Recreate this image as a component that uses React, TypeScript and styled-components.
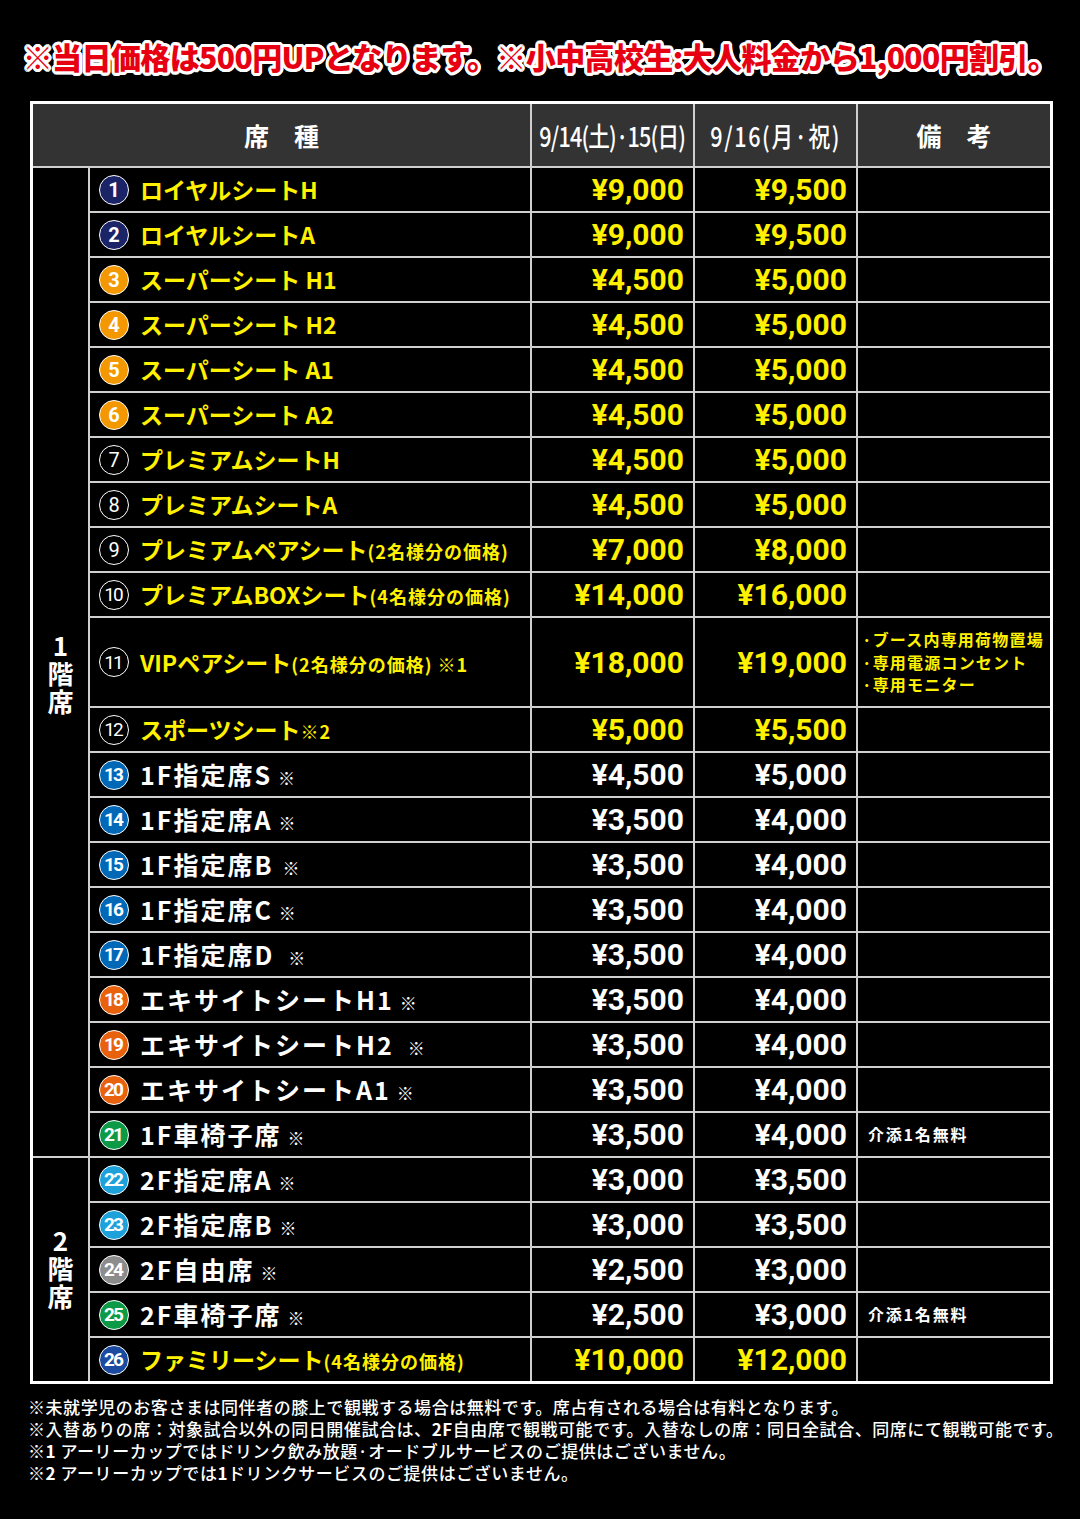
import React from 'react';
import styled, { createGlobalStyle } from 'styled-components';

const GlobalStyle = createGlobalStyle`
  html, body {
    margin: 0;
    padding: 0;
    background: #000;
  }
  body {
    font-family: 'Noto Sans CJK JP', 'Noto Sans', sans-serif;
  }
`;

const YELLOW = '#fff100';
const JP = `'Noto Sans CJK JP', 'Noto Sans', sans-serif`;
const NUM = `Roboto, 'Liberation Sans', 'Noto Sans CJK JP', sans-serif`;

const outline = (() => {
  const out: string[] = [];
  for (let i = 0; i < 16; i++) {
    const a = (i / 16) * Math.PI * 2;
    out.push(`${(Math.cos(a) * 3).toFixed(2)}px ${(Math.sin(a) * 3).toFixed(2)}px 0 #fff`);
  }
  return out.join(', ');
})();

const Page = styled.div`
  width: 1080px;
  min-height: 1519px;
  background: #000;
  padding-top: 36px;
  box-sizing: border-box;
`;

const Notice = styled.h1`
  margin: 0;
  height: 40px;
  line-height: 40px;
  text-align: center;
  font-family: ${JP};
  font-weight: 900;
  font-size: 30px;
  letter-spacing: -0.6px;
  color: #e60012;
  text-shadow: ${outline};
  white-space: nowrap;
`;

const Table = styled.div`
  margin: 25px 0 0 30px;
  width: 1023px;
  box-sizing: border-box;
  border: 3px solid #fff;
  background: #cfcfcf;
  display: grid;
  grid-template-columns: 55px 440px 161px 161px 192px;
  grid-template-rows: 62px;
  grid-auto-rows: 43px;
  gap: 2px;
`;

const HeadCell = styled.div<{ $wide?: boolean }>`
  background: #333;
  color: #fff;
  display: flex;
  align-items: center;
  justify-content: center;
  font-family: ${JP};
  font-weight: 700;
  font-size: 25px;
  grid-column: ${(p) => (p.$wide ? '1 / 3' : 'auto')};
  white-space: nowrap;
`;

const DateText = styled.span<{ $spacing: number }>`
  display: inline-block;
  font-family: ${JP};
  font-weight: 500;
  font-size: 27px;
  letter-spacing: ${(p) => p.$spacing}px;
  transform: scaleX(0.8);
`;

const FloorCell = styled.div<{ $start: number; $span: number; $shift: number }>`
  background: #000;
  color: #fff;
  grid-column: 1;
  grid-row: ${(p) => `${p.$start} / span ${p.$span}`};
  display: flex;
  align-items: center;
  justify-content: center;
  padding-top: ${(p) => p.$shift}px;
  font-family: ${JP};
  font-weight: 700;
  font-size: 26px;
  writing-mode: vertical-rl;
  text-orientation: upright;
  letter-spacing: 2px;
`;

const NameCell = styled.div<{ $tall?: boolean }>`
  background: #000;
  grid-row: ${(p) => (p.$tall ? 'span 2' : 'auto')};
  display: flex;
  align-items: center;
  gap: 11px;
  padding-left: 9px;
  white-space: nowrap;
`;

const Badge = styled.span<{ $bg: string; $two: boolean }>`
  flex-shrink: 0;
  width: 30px;
  height: 30px;
  border-radius: 50%;
  box-sizing: border-box;
  border: 1.5px solid #fff;
  background: ${(p) => p.$bg};
  color: #fff;
  display: flex;
  align-items: center;
  justify-content: center;
  font-family: ${NUM};
  font-weight: ${(p) => (p.$bg === '#000' ? 400 : 700)};
  font-size: ${(p) => (p.$two ? '19px' : '20px')};
  letter-spacing: ${(p) => (p.$two ? '-2px' : '0')};
  text-indent: ${(p) => (p.$two ? '-2px' : '0')};
`;

const Label = styled.span<{ $tone: 'yellow' | 'white' }>`
  font-family: ${JP};
  font-weight: 700;
  font-size: ${(p) => (p.$tone === 'yellow' ? '23px' : '25px')};
  letter-spacing: ${(p) => (p.$tone === 'yellow' ? '0' : '2px')};
  color: ${(p) => (p.$tone === 'yellow' ? YELLOW : '#fff')};
  line-height: 1;
  display: flex;
  align-items: baseline;
`;

const Sub = styled.span`
  font-size: 18px;
  letter-spacing: 1px;
`;

const Mark = styled.span<{ $gap: number }>`
  font-size: 17px;
  font-weight: 400;
  letter-spacing: 0;
  margin-left: ${(p) => p.$gap}px;
`;

const PriceCell = styled.div<{ $tone: 'yellow' | 'white'; $tall?: boolean }>`
  background: #000;
  grid-row: ${(p) => (p.$tall ? 'span 2' : 'auto')};
  display: flex;
  align-items: center;
  justify-content: flex-end;
  padding-right: 9px;
  font-family: ${NUM};
  font-weight: 700;
  font-size: 30px;
  color: ${(p) => (p.$tone === 'yellow' ? YELLOW : '#fff')};
`;

const NoteCell = styled.div<{ $tone: 'yellow' | 'white'; $tall?: boolean }>`
  background: #000;
  grid-row: ${(p) => (p.$tall ? 'span 2' : 'auto')};
  display: flex;
  flex-direction: column;
  justify-content: center;
  padding-left: ${(p) => (p.$tone === 'yellow' ? '4px' : '10px')};
  font-family: ${JP};
  font-weight: 700;
  font-size: 16px;
  line-height: 22.5px;
  letter-spacing: ${(p) => (p.$tone === 'yellow' ? '1.2px' : '1.8px')};
  color: ${(p) => (p.$tone === 'yellow' ? YELLOW : '#fff')};
  white-space: nowrap;
`;

const Notes = styled.div`
  margin: 12px 0 0 28px;
  color: #fff;
  font-family: ${JP};
  font-weight: 500;
  font-size: 17px;
  line-height: 22px;
  letter-spacing: 0.55px;
  white-space: nowrap;

  b {
    font-weight: 700;
  }
`;

type Tone = 'yellow' | 'white';

interface Seat {
  no: number;
  badge: string;
  label: string;
  sub?: string;
  mark?: string;
  markGap?: number;
  p1: string;
  p2: string;
  note?: string[];
  tone: Tone;
  tall?: boolean;
}

const NAVY = '#1b2466';
const GOLD = '#f39800';
const BLK = '#000';
const BLUE = '#0068b7';
const ORANGE = '#e8620e';
const GREEN = '#0c9a47';
const CYAN = '#1da1db';
const GRAY = '#8c8c8c';
const ROYAL = '#1a4b9e';

const seats: Seat[] = [
  { no: 1, badge: NAVY, label: 'ロイヤルシートH', p1: '¥9,000', p2: '¥9,500', tone: 'yellow' },
  { no: 2, badge: NAVY, label: 'ロイヤルシートA', p1: '¥9,000', p2: '¥9,500', tone: 'yellow' },
  { no: 3, badge: GOLD, label: 'スーパーシート H1', p1: '¥4,500', p2: '¥5,000', tone: 'yellow' },
  { no: 4, badge: GOLD, label: 'スーパーシート H2', p1: '¥4,500', p2: '¥5,000', tone: 'yellow' },
  { no: 5, badge: GOLD, label: 'スーパーシート A1', p1: '¥4,500', p2: '¥5,000', tone: 'yellow' },
  { no: 6, badge: GOLD, label: 'スーパーシート A2', p1: '¥4,500', p2: '¥5,000', tone: 'yellow' },
  { no: 7, badge: BLK, label: 'プレミアムシートH', p1: '¥4,500', p2: '¥5,000', tone: 'yellow' },
  { no: 8, badge: BLK, label: 'プレミアムシートA', p1: '¥4,500', p2: '¥5,000', tone: 'yellow' },
  { no: 9, badge: BLK, label: 'プレミアムペアシート', sub: '(2名様分の価格)', p1: '¥7,000', p2: '¥8,000', tone: 'yellow' },
  { no: 10, badge: BLK, label: 'プレミアムBOXシート', sub: '(4名様分の価格)', p1: '¥14,000', p2: '¥16,000', tone: 'yellow' },
  {
    no: 11,
    badge: BLK,
    label: 'VIPペアシート',
    sub: '(2名様分の価格) ※1',
    p1: '¥18,000',
    p2: '¥19,000',
    tone: 'yellow',
    tall: true,
    note: ['·ブース内専用荷物置場', '·専用電源コンセント', '·専用モニター'],
  },
  { no: 12, badge: BLK, label: 'スポーツシート', sub: '※2', p1: '¥5,000', p2: '¥5,500', tone: 'yellow' },
  { no: 13, badge: BLUE, label: '1F指定席S', mark: '※', markGap: 6, p1: '¥4,500', p2: '¥5,000', tone: 'white' },
  { no: 14, badge: BLUE, label: '1F指定席A', mark: '※', markGap: 6, p1: '¥3,500', p2: '¥4,000', tone: 'white' },
  { no: 15, badge: BLUE, label: '1F指定席B', mark: '※', markGap: 9, p1: '¥3,500', p2: '¥4,000', tone: 'white' },
  { no: 16, badge: BLUE, label: '1F指定席C', mark: '※', markGap: 6, p1: '¥3,500', p2: '¥4,000', tone: 'white' },
  { no: 17, badge: BLUE, label: '1F指定席D', mark: '※', markGap: 14, p1: '¥3,500', p2: '¥4,000', tone: 'white' },
  { no: 18, badge: ORANGE, label: 'エキサイトシートH1', mark: '※', markGap: 6, p1: '¥3,500', p2: '¥4,000', tone: 'white' },
  { no: 19, badge: ORANGE, label: 'エキサイトシートH2', mark: '※', markGap: 14, p1: '¥3,500', p2: '¥4,000', tone: 'white' },
  { no: 20, badge: ORANGE, label: 'エキサイトシートA1', mark: '※', markGap: 6, p1: '¥3,500', p2: '¥4,000', tone: 'white' },
  { no: 21, badge: GREEN, label: '1F車椅子席', mark: '※', markGap: 6, p1: '¥3,500', p2: '¥4,000', tone: 'white', note: ['介添1名無料'] },
  { no: 22, badge: CYAN, label: '2F指定席A', mark: '※', markGap: 6, p1: '¥3,000', p2: '¥3,500', tone: 'white' },
  { no: 23, badge: CYAN, label: '2F指定席B', mark: '※', markGap: 6, p1: '¥3,000', p2: '¥3,500', tone: 'white' },
  { no: 24, badge: GRAY, label: '2F自由席', mark: '※', markGap: 6, p1: '¥2,500', p2: '¥3,000', tone: 'white' },
  { no: 25, badge: GREEN, label: '2F車椅子席', mark: '※', markGap: 6, p1: '¥2,500', p2: '¥3,000', tone: 'white', note: ['介添1名無料'] },
  { no: 26, badge: ROYAL, label: 'ファミリーシート', sub: '(4名様分の価格)', p1: '¥10,000', p2: '¥12,000', tone: 'yellow' },
];

const SeatRow: React.FC<{ seat: Seat }> = ({ seat }) => {
  const noteTone: Tone = seat.tall ? 'yellow' : 'white';
  return (
    <>
      <NameCell $tall={seat.tall}>
        <Badge $bg={seat.badge} $two={seat.no > 9}>
          {seat.no}
        </Badge>
        <Label $tone={seat.tone}>
          {seat.label}
          {seat.sub && <Sub>{seat.sub}</Sub>}
          {seat.mark && <Mark $gap={seat.markGap ?? 6}>{seat.mark}</Mark>}
        </Label>
      </NameCell>
      <PriceCell $tone={seat.tone} $tall={seat.tall}>
        {seat.p1}
      </PriceCell>
      <PriceCell $tone={seat.tone} $tall={seat.tall}>
        {seat.p2}
      </PriceCell>
      <NoteCell $tone={noteTone} $tall={seat.tall}>
        {seat.note?.map((line) => (
          <span key={line}>{line}</span>
        ))}
      </NoteCell>
    </>
  );
};

const App: React.FC = () => {
  return (
    <Page>
      <GlobalStyle />
      <Notice>※当日価格は500円UPとなります。※小中高校生:大人料金から1,000円割引。</Notice>

      <Table>
        <HeadCell $wide>席　種</HeadCell>
        <HeadCell>
          <DateText $spacing={-1}>9/14(土)·15(日)</DateText>
        </HeadCell>
        <HeadCell>
          <DateText $spacing={2}>9/16(月·祝)</DateText>
        </HeadCell>
        <HeadCell>備　考</HeadCell>

        <FloorCell $start={2} $span={22} $shift={26}>
          1階席
        </FloorCell>
        <FloorCell $start={24} $span={5} $shift={0}>
          2階席
        </FloorCell>

        {seats.map((seat) => (
          <SeatRow key={seat.no} seat={seat} />
        ))}
      </Table>

      <Notes>
        <div>※未就学児のお客さまは同伴者の膝上で観戦する場合は無料です。席占有される場合は有料となります。</div>
        <div>
          ※入替ありの席：対象試合以外の同日開催試合は、<b>2F</b>自由席で観戦可能です。入替なしの席：同日全試合、同席にて観戦可能です。
        </div>
        <div>
          ※<b>1</b> アーリーカップではドリンク飲み放題·オードブルサービスのご提供はございません。
        </div>
        <div>
          ※<b>2</b> アーリーカップでは<b>1</b>ドリンクサービスのご提供はございません。
        </div>
      </Notes>
    </Page>
  );
};

export default App;
